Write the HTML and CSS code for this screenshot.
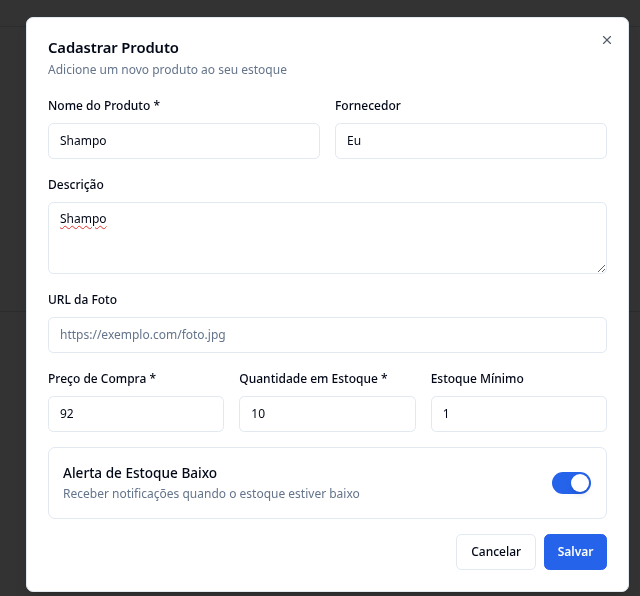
FILE: index.html
```html
<!DOCTYPE html>
<html lang="pt-BR">
<head>
<meta charset="utf-8">
<title>Cadastrar Produto</title>
<link rel="stylesheet" href="styles.css">
</head>
<body>
  <div class="page">
    <header class="page-header"></header>
    <section class="page-section"></section>
  </div>

  <div class="dialog" role="dialog" aria-labelledby="dlg-title">
    <button class="close" type="button" aria-label="Fechar">
      <svg viewBox="0 0 24 24" width="14" height="14" fill="none" stroke="currentColor" stroke-width="2" stroke-linecap="round" stroke-linejoin="round"><path d="M18 6 6 18"/><path d="m6 6 12 12"/></svg>
    </button>

    <div class="dialog-header">
      <h2 class="title" id="dlg-title">Cadastrar Produto</h2>
      <p class="desc">Adicione um novo produto ao seu estoque</p>
    </div>

    <form class="form">
      <div class="fields">
        <div class="row two">
          <div class="field">
            <label class="label" for="nome">Nome do Produto *</label>
            <input class="input" id="nome" type="text" value="Shampo">
          </div>
          <div class="field">
            <label class="label" for="forn">Fornecedor</label>
            <input class="input" id="forn" type="text" value="Eu">
          </div>
        </div>

        <div class="field">
          <label class="label" for="descr">Descrição</label>
          <textarea class="textarea" id="descr">Shampo</textarea>
        </div>

        <div class="field">
          <label class="label" for="foto">URL da Foto</label>
          <input class="input" id="foto" type="text" placeholder="https://exemplo.com/foto.jpg">
        </div>

        <div class="row three">
          <div class="field">
            <label class="label" for="preco">Preço de Compra *</label>
            <input class="input" id="preco" type="text" value="92">
          </div>
          <div class="field">
            <label class="label" for="qtd">Quantidade em Estoque *</label>
            <input class="input" id="qtd" type="text" value="10">
          </div>
          <div class="field">
            <label class="label" for="min">Estoque Mínimo</label>
            <input class="input" id="min" type="text" value="1">
          </div>
        </div>
      </div>

      <div class="switch-card">
        <div class="switch-text">
          <div class="switch-title">Alerta de Estoque Baixo</div>
          <div class="switch-desc">Receber notificações quando o estoque estiver baixo</div>
        </div>
        <button class="switch on" type="button" role="switch" aria-checked="true"><span class="thumb"></span></button>
      </div>

      <div class="actions">
        <button class="btn outline" type="button">Cancelar</button>
        <button class="btn primary" type="submit">Salvar</button>
      </div>
    </form>
  </div>
</body>
</html>
```

FILE: styles.css
```css
* { box-sizing: border-box; }

html, body {
  margin: 0;
  padding: 0;
}

body {
  background: #333333;
  font-family: "Noto Sans", "Segoe UI", "Liberation Sans", sans-serif;
  color: #020817;
  height: 596px;
  overflow: hidden;
}

.page-header {
  height: 27px;
  border-bottom: 1px solid #2b2c2e;
}

.page-section {
  margin-top: 284px;
  border-top: 1px solid #2b2c2e;
  height: 200px;
}

.dialog {
  position: fixed;
  left: 26px;
  top: 17px;
  width: 603px;
  background: #ffffff;
  border: 1px solid #e2e8f0;
  border-radius: 7px;
  padding: 21px;
  box-shadow: 0 10px 15px -3px rgba(0,0,0,0.1), 0 4px 6px -4px rgba(0,0,0,0.1);
}

.close {
  position: absolute;
  top: 14px;
  right: 14px;
  width: 15px;
  height: 15px;
  padding: 0;
  border: 0;
  background: transparent;
  color: #0f172a;
  opacity: 0.7;
  display: flex;
  align-items: center;
  justify-content: center;
}

.dialog-header {
  display: flex;
  flex-direction: column;
  gap: 5px;
}

.title {
  margin: 0;
  font-size: 14.8px;
  line-height: 17px;
  font-weight: 600;
  letter-spacing: -0.1px;
}

.desc {
  margin: 0;
  font-size: 12px;
  line-height: 18px;
  color: #64748b;
}

.form {
  margin-top: 17.5px;
  display: flex;
  flex-direction: column;
  gap: 15px;
}

.fields {
  display: flex;
  flex-direction: column;
  gap: 17px;
}

.row {
  display: grid;
  gap: 15px;
}

.row.two { grid-template-columns: 1fr 1fr; }
.row.three { grid-template-columns: 1fr 1fr 1fr; }

.field {
  display: flex;
  flex-direction: column;
  gap: 8px;
}

.label {
  font-size: 12px;
  line-height: 18px;
  font-weight: 500;
  color: #020817;
}

.input,
.textarea {
  width: 100%;
  border: 1px solid #e2e8f0;
  border-radius: 5.4px;
  background: #ffffff;
  font-family: inherit;
  font-size: 12px;
  color: #020817;
  outline: none;
}

.input {
  height: 36px;
  padding: 0 11px;
}

.input::placeholder {
  color: #64748b;
}

.textarea {
  display: block;
  height: 72px;
  padding: 7px 11px;
  line-height: 18px;
  resize: vertical;
  text-decoration: underline wavy #e0312b;
  text-decoration-thickness: 1px;
  text-underline-offset: 2px;
}

.switch-card {
  display: flex;
  align-items: center;
  justify-content: space-between;
  border: 1px solid #e2e8f0;
  border-radius: 7px;
  padding: 14.5px 15px 14.5px 14px;
}

.switch-text {
  display: flex;
  flex-direction: column;
  gap: 2px;
}

.switch-title {
  font-size: 13.6px;
  line-height: 21px;
  font-weight: 500;
}

.switch-desc {
  font-size: 12px;
  line-height: 18px;
  color: #64748b;
}

.switch {
  width: 39px;
  height: 22px;
  border-radius: 999px;
  border: 2px solid transparent;
  padding: 0;
  background: #2563eb;
  display: flex;
  align-items: center;
  justify-content: flex-end;
}

.thumb {
  width: 18px;
  height: 18px;
  border-radius: 50%;
  background: #ffffff;
  box-shadow: 0 4px 6px -1px rgba(0,0,0,0.1), 0 2px 4px -2px rgba(0,0,0,0.1);
}

.actions {
  display: flex;
  justify-content: flex-end;
  gap: 8px;
}

.btn {
  height: 36px;
  padding: 0 14px;
  border-radius: 5.4px;
  font-family: inherit;
  font-size: 12px;
  font-weight: 500;
  cursor: pointer;
}

.btn.outline {
  background: #ffffff;
  border: 1px solid #e2e8f0;
  color: #020817;
  padding: 0 14px;
}

.btn.primary {
  background: #2563eb;
  border: 1px solid #2563eb;
  color: #ffffff;
  padding: 0 12.5px;
  font-weight: 600;
}
```
